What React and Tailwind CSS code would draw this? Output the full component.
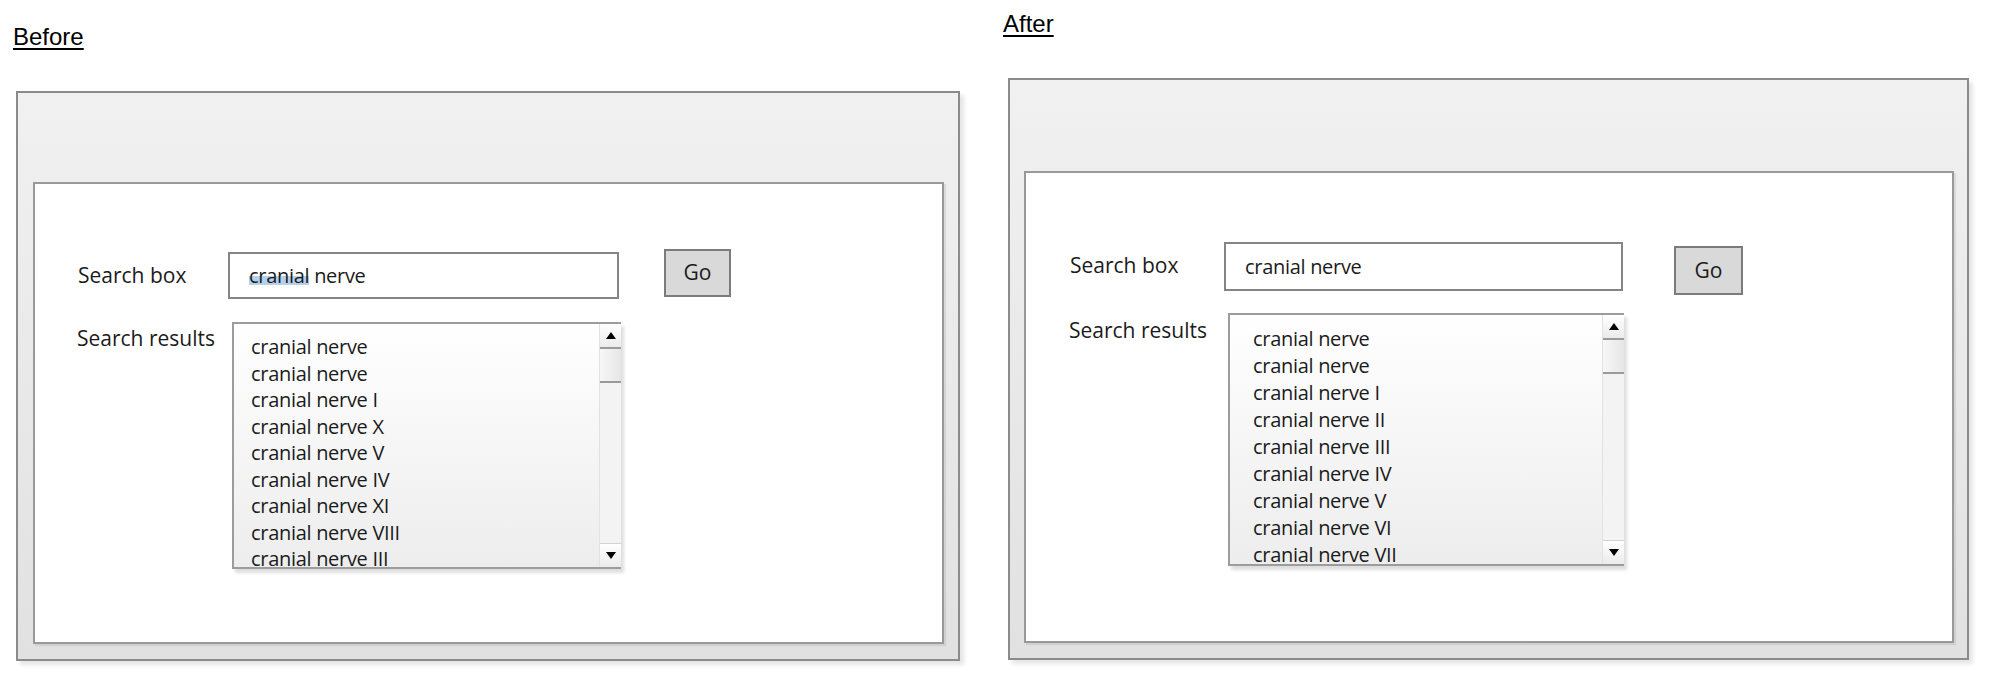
const BEFORE_ITEMS = ['cranial nerve', 'cranial nerve', 'cranial nerve I', 'cranial nerve X', 'cranial nerve V', 'cranial nerve IV', 'cranial nerve XI', 'cranial nerve VIII', 'cranial nerve III'];
const AFTER_ITEMS = ['cranial nerve', 'cranial nerve', 'cranial nerve I', 'cranial nerve II', 'cranial nerve III', 'cranial nerve IV', 'cranial nerve V', 'cranial nerve VI', 'cranial nerve VII'];

const SANS = "font-['Open_Sans',sans-serif] text-[#1b1b1b]";

function Heading({ children }) {
  return (
    <div className="font-['Liberation_Sans',Arial,sans-serif] text-[24px] leading-[28px] text-black underline decoration-2 underline-offset-[3px]">
      {children}
    </div>
  );
}

function Scrollbar() {
  return (
    <div className="w-[22px] shrink-0 flex flex-col bg-[#f3f3f3] border-l border-[#e2e2e2] shadow-[2px_1px_2px_rgba(0,0,0,0.12)]">
      <div className="h-[25px] shrink-0 flex items-center justify-center bg-linear-to-b from-white to-[#ebebeb] border-b-2 border-[#9a9a9a]">
        <span className="w-0 h-0 border-x-[5px] border-x-transparent border-b-[7px] border-b-black" />
      </div>
      <div className="h-[34px] shrink-0 bg-linear-to-r from-[#f7f7f7] to-[#e6e6e6] border-b-2 border-[#9a9a9a]" />
      <div className="flex-1" />
      <div className="h-[24px] shrink-0 flex items-center justify-center bg-linear-to-b from-white to-[#ebebeb] border-t border-[#d2d2d2]">
        <span className="w-0 h-0 border-x-[5px] border-x-transparent border-t-[7px] border-t-black" />
      </div>
    </div>
  );
}

// rows use a short line box + gap so the last one isn't clipped by the listbox edge
function Listbox({ size, pad, items }) {
  return (
    <div className={`flex shrink-0 border-2 border-r-0 border-[#9c9c9c] bg-linear-to-b from-white to-[#ededed] shadow-[3px_4px_3px_rgba(0,0,0,0.13)] overflow-hidden ${size}`}>
      <div className={`flex-1 flex flex-col overflow-hidden ${pad}`}>
        {items.map((t, i) => (
          <div key={i} className="leading-[15px] text-[20px] tracking-[-0.3px] whitespace-nowrap">{t}</div>
        ))}
      </div>
      <Scrollbar />
    </div>
  );
}

function SearchInput({ size, highlight }) {
  return (
    <div className={`shrink-0 flex items-center pl-[19px] bg-white border-2 border-[#858585] text-[20px] tracking-[-0.3px] ${size}`}>
      {highlight ? (
        <span>
          <span className="bg-[linear-gradient(to_bottom,transparent_52%,#b3d1ec_52%,#b3d1ec_86%,transparent_86%)]">cranial</span> nerve
        </span>
      ) : (
        'cranial nerve'
      )}
    </div>
  );
}

function GoButton({ size }) {
  return (
    <div className={`shrink-0 flex items-center justify-center bg-[#d9d9d9] border-2 border-[#7b7b7b] text-[21px] ${size}`}>
      Go
    </div>
  );
}

export default function App() {
  return (
    <div className={`w-[2000px] h-[679px] bg-white flex items-start overflow-hidden ${SANS}`}>
      {/* before */}
      <div className="ml-[13px] w-[990px] shrink-0 pt-[23px]">
        <Heading>Before</Heading>
        <div className="mt-[40px] ml-[3px] w-[944px] h-[570px] border-2 border-[#8b8b8b] bg-linear-to-b from-[#f1f1f1] to-[#e1e1e1] pt-[89px] pl-[15px] shadow-[4px_4px_4px_rgba(0,0,0,0.1)]">
          <div className="w-[911px] h-[462px] bg-white border-2 border-[#999999] shadow-[2px_2px_1px_rgba(0,0,0,0.08)]">
            <div className="flex items-start h-[115px]">
              <div className="ml-[43px] w-[150px] shrink-0 mt-[77px] text-[21px] leading-[28px]">Search box</div>
              <SearchInput size="mt-[68px] w-[391px] h-[47px]" highlight />
              <GoButton size="ml-[45px] mt-[65px] w-[67px] h-[48px]" />
            </div>
            <div className="flex items-start mt-[23px]">
              <div className="ml-[42px] w-[155px] shrink-0 mt-[2px] text-[21px] leading-[28px]">Search results</div>
              <Listbox size="w-[389px] h-[247px]" pad="pl-[17px] pt-[15px] gap-[11.5px]" items={BEFORE_ITEMS} />
            </div>
          </div>
        </div>
      </div>

      {/* after */}
      <div className="shrink-0 pt-[10px]">
        <Heading>After</Heading>
        <div className="mt-[40px] ml-[5px] w-[961px] h-[582px] border-2 border-[#8b8b8b] bg-linear-to-b from-[#f1f1f1] to-[#e1e1e1] pt-[91px] pl-[14px] shadow-[4px_4px_4px_rgba(0,0,0,0.1)]">
          <div className="w-[930px] h-[472px] bg-white border-2 border-[#999999] shadow-[2px_2px_1px_rgba(0,0,0,0.08)]">
            <div className="flex items-start h-[122px]">
              <div className="ml-[44px] w-[154px] shrink-0 mt-[78px] text-[21px] leading-[28px]">Search box</div>
              <SearchInput size="mt-[69px] w-[399px] h-[49px]" />
              <GoButton size="ml-[51px] mt-[73px] w-[69px] h-[49px]" />
            </div>
            <div className="flex items-start mt-[18px]">
              <div className="ml-[43px] w-[159px] shrink-0 mt-[3px] text-[21px] leading-[28px]">Search results</div>
              <Listbox size="w-[396px] h-[253px]" pad="pl-[23px] pt-[16px] gap-[12px]" items={AFTER_ITEMS} />
            </div>
          </div>
        </div>
      </div>
    </div>
  );
}
